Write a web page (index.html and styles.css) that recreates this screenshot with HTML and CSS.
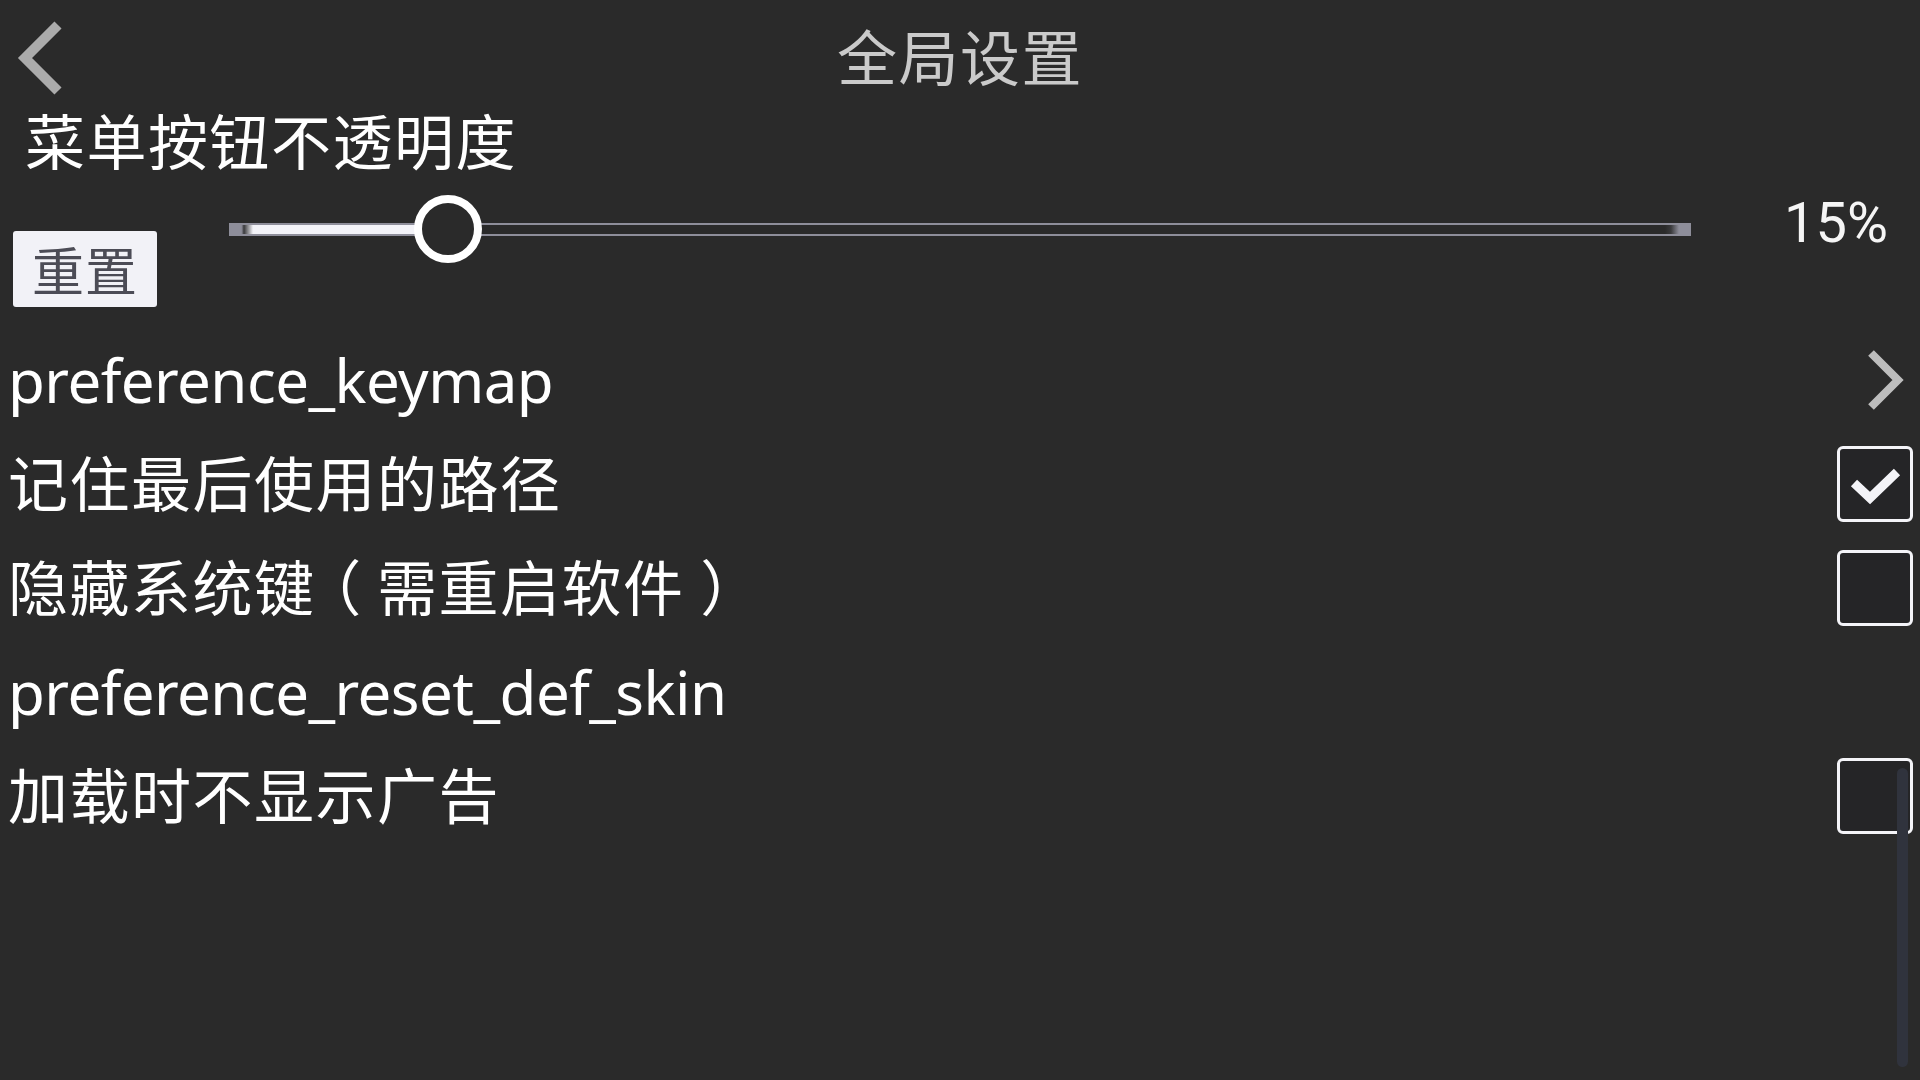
FILE: index.html
```html
<!DOCTYPE html>
<html lang="zh-CN">
<head>
<meta charset="UTF-8" />
<meta name="viewport" content="width=device-width, initial-scale=1.0" />
<title>全局设置</title>
<link rel="stylesheet" href="styles.css">
</head>
<body>
<div class="screen">
  <div class="top_bar">
    <svg class="back" width="60" height="80" viewBox="0 0 60 80">
      <polyline points="48,7 15,40 48,73" />
    </svg>
    <h1 class="title">全局设置</h1>
    <span></span>
  </div>

  <div class="opacity_label">菜单按钮不透明度</div>
  <div class="slider_row">
    <button class="reset">重置</button>
    <div class="slider">
      <div class="track"><div class="fill" style="width: 15%"></div></div>
      <div class="thumb" style="left: calc(15% - 34px)"></div>
    </div>
    <div class="value">15%</div>
  </div>

  <ul class="prefs">
    <li class="pref">
      <span class="name en">preference_keymap</span>
      <svg class="arrow" width="40" height="64" viewBox="0 0 40 64">
        <polyline points="4,5 31,32 4,59" />
      </svg>
    </li>
    <li class="pref">
      <span class="name zh">记住最后使用的路径</span>
      <span class="check">
        <svg width="70" height="70" viewBox="0 0 70 70">
          <polyline points="14,34 30,49 57,23" />
        </svg>
      </span>
    </li>
    <li class="pref">
      <span class="name zh">隐藏系统键<span class="paren">（</span>需重启软件<span class="paren">）</span></span>
      <span class="check"></span>
    </li>
    <li class="pref">
      <span class="name en">preference_reset_def_skin</span>
    </li>
    <li class="pref">
      <span class="name zh">加载时不显示广告</span>
      <span class="check"></span>
    </li>
  </ul>

  <div class="scroll_thumb"></div>
</div>
</body>
</html>
```

FILE: styles.css
```css
body {
margin: 0;
background: #2a2a2a;
font-family: "Noto Sans", "Noto Sans CJK SC", sans-serif;
color: #ffffff;
text-spacing-trim: space-all;
}

.screen {
position: relative;
width: 1920px;
height: 1080px;
overflow: hidden;
}

/* header */
.top_bar {
display: grid;
grid-template-columns: 1fr auto 1fr;
align-items: center;
height: 96px;
padding-top: 10px;
}

.back {
margin-left: 10px;
}

.back polyline {
fill: none;
stroke: #ababab;
stroke-width: 10;
}

.title {
margin: 0;
font-size: 60px;
font-weight: normal;
line-height: 1.2;
letter-spacing: 1.5px;
color: #cacaca;
}

/* opacity slider */
.opacity_label {
padding-left: 25px;
font-size: 60px;
line-height: 72px;
letter-spacing: 1.5px;
}

.slider_row {
display: flex;
align-items: flex-start;
height: 150px;
}

.reset {
width: 144px;
height: 76px;
margin: 53px 0 0 13px;
padding: 0;
border: none;
border-radius: 3px;
background: #f2f2f7;
color: #4c4c56;
font-family: "Noto Sans CJK SC", sans-serif;
font-size: 52px;
line-height: 1;
letter-spacing: 1px;
}

.slider {
position: relative;
display: flex;
align-items: center;
flex: 0 0 1462px;
height: 68px;
margin: 17px 0 0 72px;
}

.track {
display: flex;
width: 100%;
height: 13px;
box-sizing: border-box;
border-top: 2px solid #8e8e9a;
border-bottom: 2px solid #8e8e9a;
background: linear-gradient(to right, #8e8e9a 0, #8e8e9a 12px, #3a3a3c 20px, #2a2a2a 26px,
  #2a2a2a calc(100% - 26px), #3a3a3c calc(100% - 20px), #8e8e9a calc(100% - 12px), #8e8e9a 100%);
}

.fill {
background: linear-gradient(to right, transparent 0, transparent 13px, #3a3a3c 15px, #f3f3f8 24px, #f3f3f8 100%);
}

.thumb {
position: absolute;
top: 0;
width: 68px;
height: 68px;
box-sizing: border-box;
border: 8px solid #ffffff;
border-radius: 50%;
background: #2a2a2a;
}

.value {
margin: 17px 32px 0 auto;
font-family: "Roboto", sans-serif;
font-size: 56px;
line-height: 56px;
color: #f5f5f5;
}

/* preference list */
.prefs {
margin: 0;
padding: 0;
list-style: none;
}

.pref {
display: flex;
align-items: center;
height: 104px;
padding: 0 7px 0 8px;
font-size: 60px;
line-height: 1.2;
}

.name {
flex: 1;
}

.name.en {
letter-spacing: -0.55px;
}

.name.zh {
letter-spacing: 1.5px;
}

/* full-width brackets sit in the middle of their cell */
.paren {
display: inline-block;
width: 61.5px;
text-align: center;
letter-spacing: 0;
font-feature-settings: "halt";
}

.arrow {
margin-right: 6px;
}

.arrow polyline {
fill: none;
stroke: #bdbdbd;
stroke-width: 8;
}

.check {
display: block;
width: 76px;
height: 76px;
box-sizing: border-box;
border: 3px solid #f4f4f8;
border-radius: 6px;
background: #252527;
}

.check svg {
display: block;
}

.check polyline {
fill: none;
stroke: #f4f4f8;
stroke-width: 9;
}

.scroll_thumb {
position: absolute;
top: 768px;
right: 12px;
width: 11px;
height: 299px;
border-radius: 6px;
background: #30333d;
}
```
